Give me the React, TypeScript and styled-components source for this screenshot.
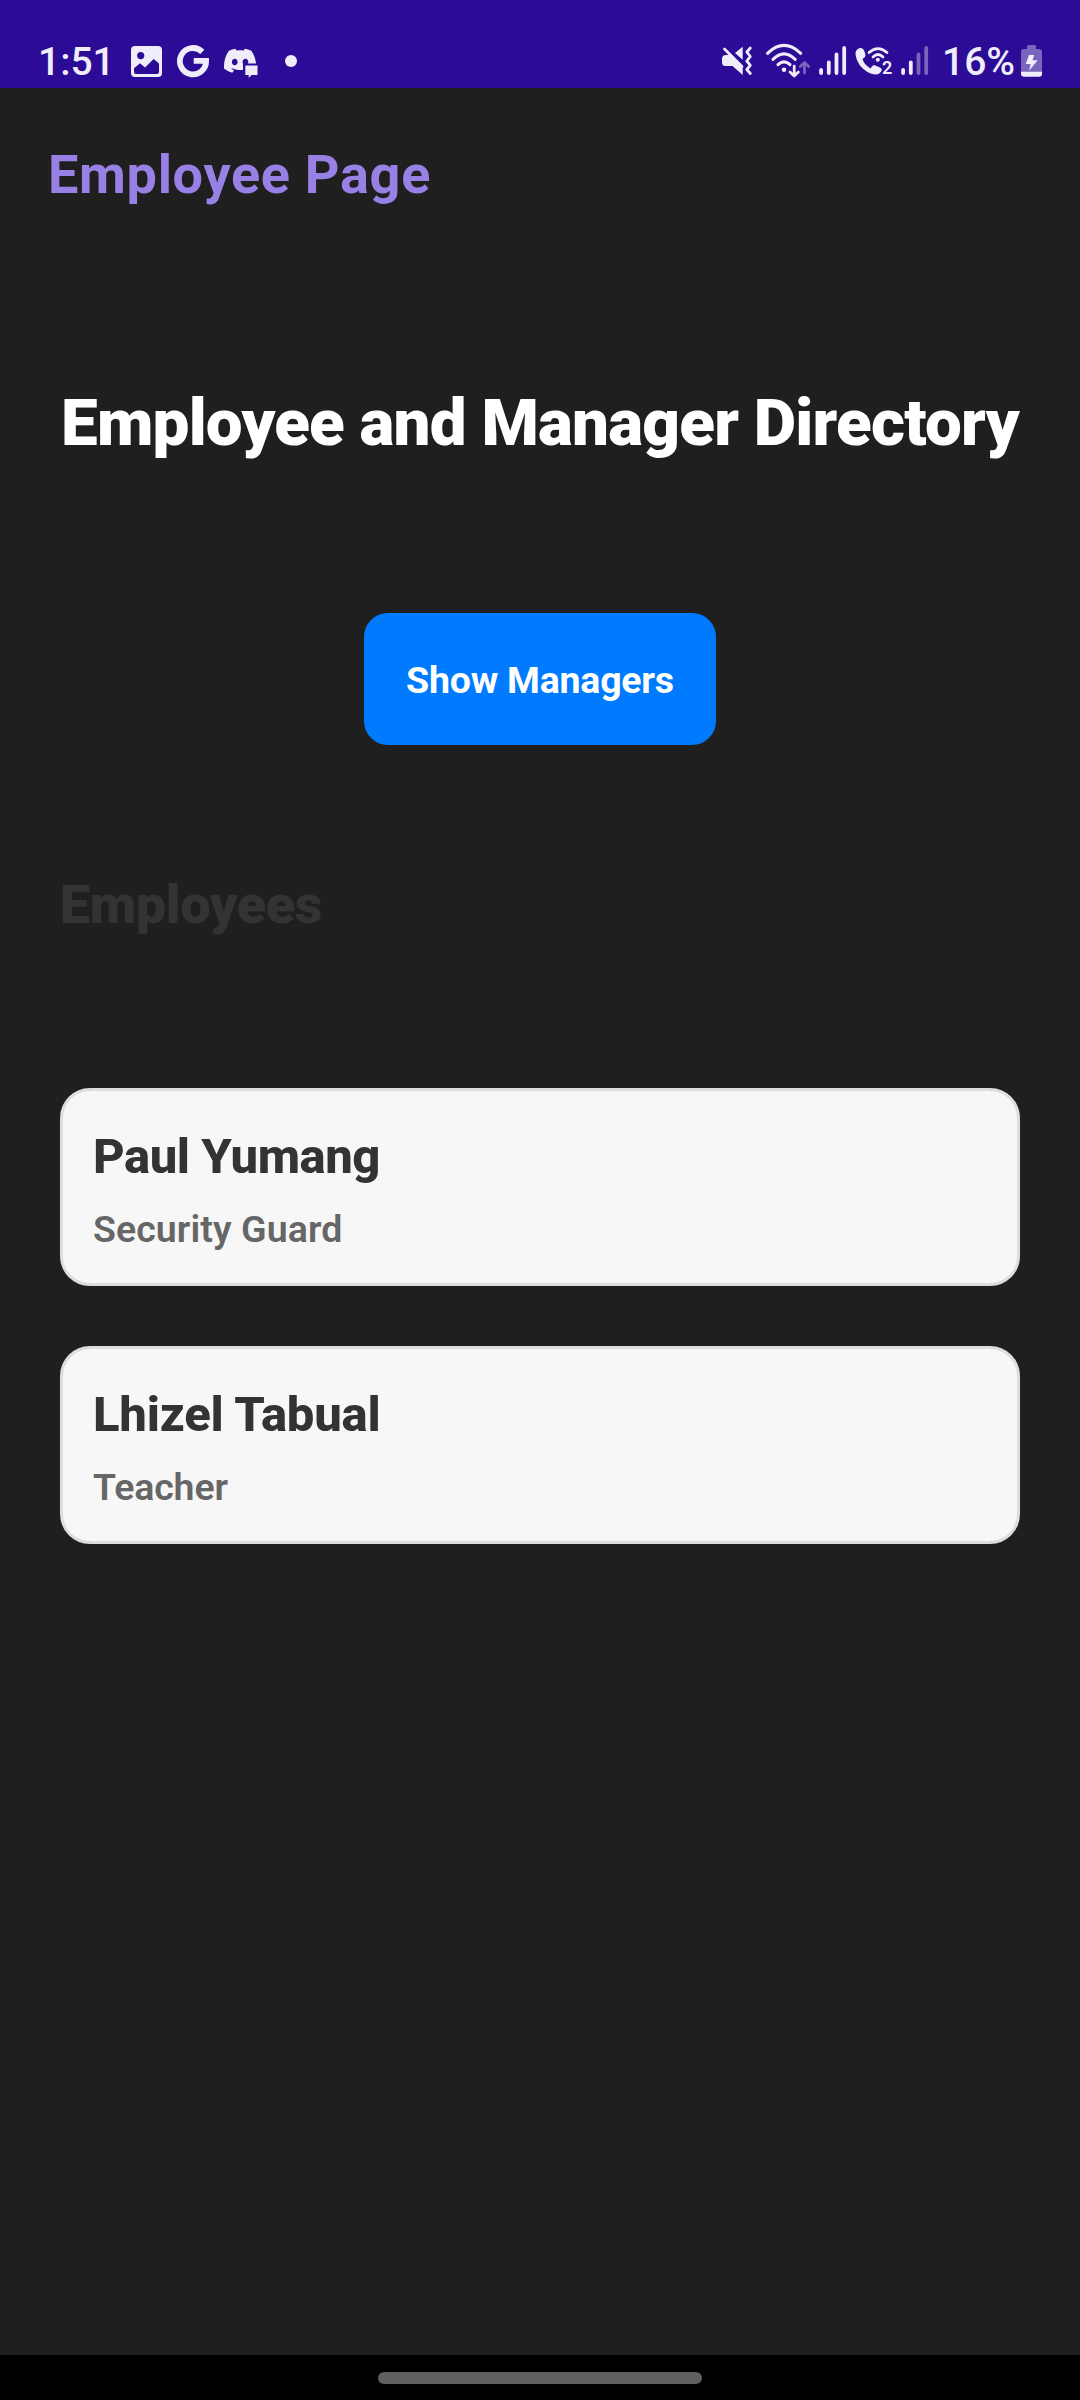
import React from "react";
import styled, { createGlobalStyle } from "styled-components";
import { SiDiscord } from "react-icons/si";

const ink = "#efedf9";
const purple = "#2c0b96";

const Global = createGlobalStyle`
  body { margin: 0; background: #1f1f1f; font-family: Roboto, "Noto Sans", sans-serif; }
`;
const Screen = styled.div`
  width: 1080px; height: 2400px; display: flex; flex-direction: column; background: #1f1f1f; overflow: hidden;
`;
const StatusBar = styled.header`
  box-sizing: border-box; height: 88px; padding: 40px 36px 0 38px; display: flex; justify-content: space-between;
  background: ${purple}; flex: none;
`;
const Group = styled.div`display: flex; height: 40px;`;
const StatusText = styled.span<{ $w: number }>`
  width: ${p => p.$w}px; font-size: 39px; font-weight: 500; line-height: 45px; color: ${ink}; white-space: nowrap;
`;
const Glyph = styled.svg`display: block; flex: none; height: 40px; overflow: visible; color: ${ink};`;
const AppBar = styled.div`height: 174px; flex: none; box-sizing: border-box; padding: 55px 48px 0;`;
const PageTitle = styled.h1`
  margin: 0; font-size: 54px; line-height: 64px; font-weight: 700; letter-spacing: 0.7px; color: #9880e5;
`;
const Main = styled.main`flex: 1; display: flex; flex-direction: column; padding: 122px 60px 0;`;
const Heading = styled.h2`
  margin: 0; font-size: 65.5px; line-height: 78px; font-weight: 900; letter-spacing: -0.77px; color: #fff;
  white-space: nowrap; padding-left: 1px;
`;
const Button = styled.button`
  align-self: center; margin-top: 151px; width: 352px; height: 132px; border: 0; border-radius: 24px; padding: 2px 0 0;
  background: #007bff; color: #fff; font: 700 37.5px/44px Roboto, sans-serif; letter-spacing: -0.23px;
`;
const Section = styled.h3`
  margin: 128px 0 0; font-size: 54px; line-height: 64px; font-weight: 900; letter-spacing: -0.45px; color: #333;
`;
const List = styled.div`display: flex; flex-direction: column; gap: 60px; margin-top: 151px;`;
const Card = styled.article`
  box-sizing: border-box; height: 198px; border: 3px solid #ddd; border-radius: 30px; background: #f7f7f7;
  padding: 37px 30px 0; display: flex; flex-direction: column; gap: 21px;
`;
const Name = styled.div<{ $s: number }>`
  font-size: 49px; line-height: 58px; font-weight: 800; letter-spacing: ${p => p.$s}px; color: #333;
`;
const Role = styled.div<{ $s: number }>`
  font-size: 37.5px; line-height: 44px; font-weight: 600; letter-spacing: ${p => p.$s}px; color: #666;
`;
const NavBar = styled.footer`
  height: 45px; flex: none; background: #000; display: flex; justify-content: center; padding-top: 17px; box-sizing: border-box;
`;
const Pill = styled.div`width: 324px; height: 12px; border-radius: 6px; background: #606060;`;

function Icon({ x, w, children }: { x: number; w: number; children: React.ReactNode }) {
  return <Glyph width={w} viewBox={`${x} 40 ${w} 40`} fill={ink}>{children}</Glyph>;
}
const line = { fill: "none", stroke: ink, strokeLinecap: "round" as const, strokeLinejoin: "round" as const };

function Signal({ x, dim }: { x: number; dim: boolean }) {
  return <>{[68, 60.6, 52.6, 46].map((top, i) => (
    <rect key={i} x={x + i * 7.7} y={top} width={3.8} height={75 - top} rx={1.9} opacity={dim && i > 1 ? 0.4 : 1} />
  ))}</>;
}

const people = [
  { name: "Paul Yumang", nameSpacing: -0.45, role: "Security Guard", roleSpacing: 0.08 },
  { name: "Lhizel Tabual", nameSpacing: -0.2, role: "Teacher", roleSpacing: -0.15 },
];

export default function App() {
  return (
    <Screen>
      <Global />
      <StatusBar>
        <Group>
          <StatusText $w={87}>1:51</StatusText>
          <Icon x={125} w={45}>
            <rect x={131} y={46} width={31} height={31} rx={4} />
            <circle cx={140.7} cy={55.6} r={3.6} fill={purple} />
            <path d="M134 68.3 140 63.3 145 67.5 153.7 59 159 63.5V72Q159 74 157 74H136Q134 74 134 72Z" fill={purple} />
          </Icon>
          <Icon x={170} w={45}>
            <path d="M202.3 51.9A13.1 13.2 0 1 0 206.1 60.9H193.7" {...line} strokeLinecap="butt" strokeLinejoin="miter" strokeWidth={5.8} />
          </Icon>
          <Icon x={215} w={50}>
            <g transform="translate(224 45.1) scale(1.34 1.31)"><SiDiscord size={24} /></g>
            <path d="M245 65.5H258V76H252L249.5 78.5V76H245Z" stroke={purple} strokeWidth={4} />
            <path d="M246 65.5H257.5V75H251.5L248.7 78V75H245.3V66Z" />
          </Icon>
          <Icon x={265} w={40}><circle cx={291} cy={61} r={6} /></Icon>
        </Group>
        <Group>
          <Icon x={717} w={40}>
            <path d="M722 59Q722 55 726 55H730L742.7 67.5V75L732.5 66H725.5Q722 66 722 62.5Z" />
            <path d="M735 53 742.7 46.7V59.7Z" />
            <path d="M724.5 49 742 66.5" {...line} strokeWidth={2.8} />
            <path d="M750.3 48 746.8 52 750.3 56.5 746.8 61 750.3 65.3 746.8 69.5 750.3 73.5" {...line} strokeWidth={2.8} />
          </Icon>
          <Icon x={757} w={57}>
            <path d="M767.5 53.3Q784 37.5 800.7 53.3M773 59.3Q784 48.3 795.2 59.3M778 64.7Q784 59 790 64.7" {...line} strokeWidth={3.1} />
            <circle cx={784} cy={69.7} r={2.3} />
            <path d="M794.2 66V75.5M790 72 794.2 76 798.4 72" {...line} strokeWidth={2.7} />
            <path d="M804.5 73V62.5M800.3 66.5 804.5 62.5 808.7 66.5" {...line} strokeWidth={2.7} opacity={0.4} />
          </Icon>
          <Icon x={814} w={37}><Signal x={819.2} dim={false} /></Icon>
          <Icon x={851} w={45}>
            <path d="M860 48Q863.5 47.5 865 53L865.5 55.5Q865.5 57 862.5 59Q864 64.5 870.5 68.5Q872 65.5 874 65L880 67.5Q882.5 69 881.5 71Q879 75 875 74.5Q866 73 860 65.5Q855.5 59 855.5 53Q856 49 860 48Z" />
            <path d="M869 52.6Q878 44.5 887 52.6M873 57Q878 52 883 57" {...line} strokeWidth={2.7} />
            <circle cx={877.8} cy={59.8} r={2} />
            <text x={882} y={74.3} fontSize={18} fontWeight={600} stroke={purple} strokeWidth={3} paintOrder="stroke">2</text>
          </Icon>
          <Icon x={896} w={46}><Signal x={901.2} dim /></Icon>
          <StatusText $w={74}>16%</StatusText>
          <Icon x={1016} w={28}>
            <path d="M1027 49V46.5Q1027 45 1028.5 45H1034.5Q1036 45 1036 46.5V49H1039Q1042 49 1042 52V72H1021V52Q1021 49 1024 49Z" opacity={0.4} />
            <path d="M1021 71.8H1042V74Q1042 76.8 1039 76.8H1024Q1021 76.8 1021 74Z" />
            <path d="M1029 55H1034.3L1032.5 60.3H1037.7L1029 70.7 1030.7 64H1025.7Z" />
          </Icon>
        </Group>
      </StatusBar>
      <AppBar><PageTitle>Employee Page</PageTitle></AppBar>
      <Main>
        <Heading>Employee and Manager Directory</Heading>
        <Button>Show Managers</Button>
        <Section>Employees</Section>
        <List>
          {people.map(p => (
            <Card key={p.name}>
              <Name $s={p.nameSpacing}>{p.name}</Name>
              <Role $s={p.roleSpacing}>{p.role}</Role>
            </Card>
          ))}
        </List>
      </Main>
      <NavBar><Pill /></NavBar>
    </Screen>
  );
}
